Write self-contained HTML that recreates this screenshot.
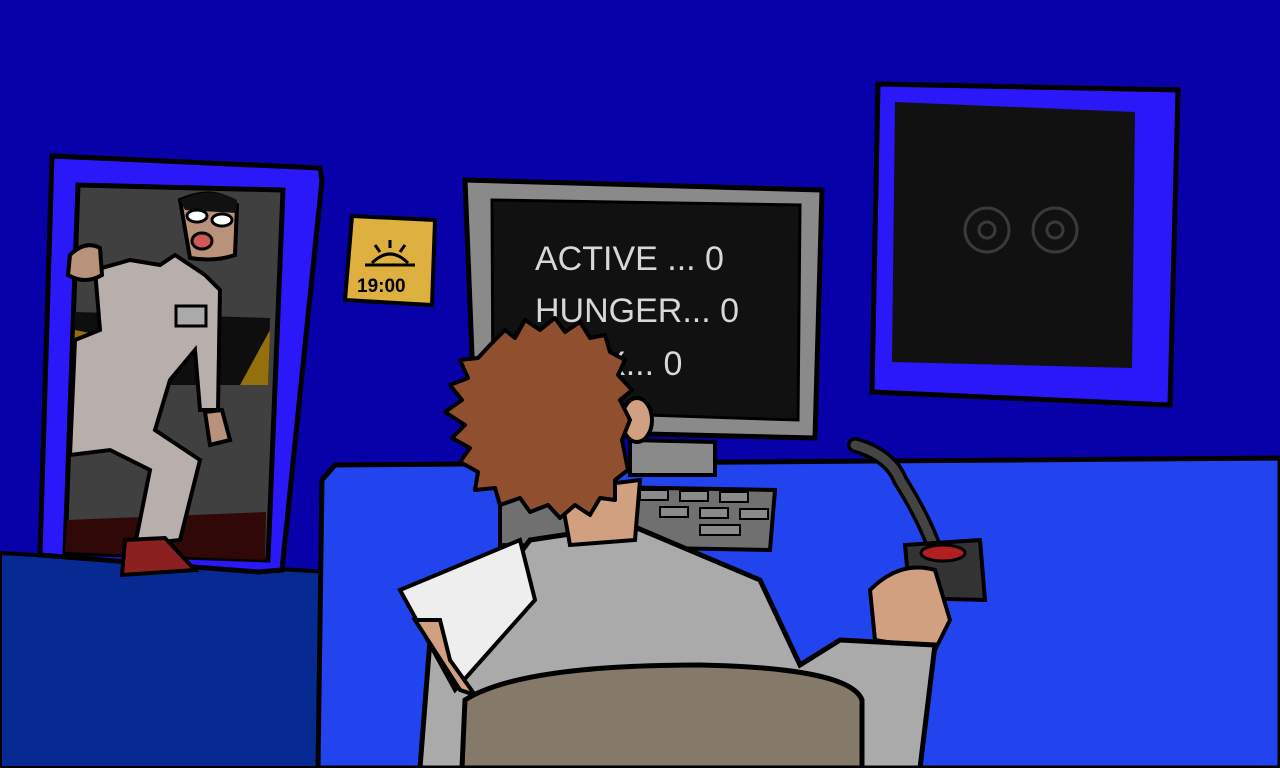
<!DOCTYPE html>
<html><head><meta charset="utf-8"><style>
html,body{margin:0;padding:0;width:1280px;height:768px;overflow:hidden;background:#0800a8}
svg{display:block}
text{font-family:"Liberation Sans",sans-serif}
</style></head><body>
<svg width="1280" height="768" viewBox="0 0 1280 768" xmlns="http://www.w3.org/2000/svg">
<rect width="1280" height="768" fill="#0800a8"/>
<path d="M0 553 L330 572 L320 768 L0 768Z" fill="#062a92" stroke="#000" stroke-width="4"/>
<path d="M52 156 L320 168 L322 180 L282 570 L258 572 L40 555Z" fill="#2a18f8" stroke="#000" stroke-width="5"/>
<path d="M78 185 L283 190 L268 560 L65 553Z" fill="#404040" stroke="#000" stroke-width="5"/>
<path d="M75 312 L270 318 L268 385 L72 385Z" fill="#0e0e0e"/>
<path d="M75 330 L100 335 L85 380 L73 380Z" fill="#94700c"/>
<path d="M150 340 L180 340 L165 385 L135 385Z" fill="#94700c"/>
<path d="M270 330 L268 385 L240 385Z" fill="#94700c"/>
<path d="M67 520 L266 512 L265 560 L65 552Z" fill="#300808"/>
<path d="M130 260 L160 265 L175 255 L205 275 L220 290 L218 410 L200 410 L195 350 L170 380 L155 430 L200 460 L180 540 L135 545 L150 470 L110 450 L70 455 L75 340 L100 330 L95 270 Z" fill="#b8aeac" stroke="#000" stroke-width="4"/>
<path d="M125 540 L165 538 L195 570 L122 575Z" fill="#8a2020" stroke="#000" stroke-width="4"/>
<path d="M70 255 Q85 240 100 248 L102 275 Q85 285 68 275Z" fill="#b8927a" stroke="#000" stroke-width="4"/>
<path d="M205 412 L222 410 L230 440 L210 445Z" fill="#b8927a" stroke="#000" stroke-width="4"/>
<path d="M180 200 Q215 185 237 205 L235 255 Q215 262 190 258 Z" fill="#b8927a" stroke="#000" stroke-width="4"/>
<path d="M180 200 Q210 185 237 200 L236 213 L185 210Z" fill="#111"/>
<ellipse cx="197" cy="216" rx="10" ry="6" fill="#fff" stroke="#000" stroke-width="3"/>
<ellipse cx="222" cy="220" rx="10" ry="6" fill="#fff" stroke="#000" stroke-width="3"/>
<ellipse cx="202" cy="241" rx="10" ry="8" fill="#d05858" stroke="#000" stroke-width="3"/>
<rect x="176" y="306" width="30" height="20" fill="#aaa" stroke="#000" stroke-width="3"/>
<path d="M352 216 L435 220 L432 305 L345 300Z" fill="#ddb040" stroke="#000" stroke-width="4"/>
<text x="357" y="292" font-size="19" font-weight="bold" fill="#000">19:00</text>
<path d="M372 263 Q390 245 408 263 M365 265 L415 265 M390 240 L390 248 M375 245 L380 252 M405 245 L400 252" stroke="#000" stroke-width="3" fill="none"/>
<path d="M878 84 L1178 90 L1170 405 L872 392Z" fill="#2a18f8" stroke="#000" stroke-width="5"/>
<path d="M895 102 L1135 112 L1132 368 L892 362Z" fill="#111"/>
<g stroke="#3a3a3a" stroke-width="3" fill="none">
<circle cx="987" cy="230" r="22"/><circle cx="987" cy="230" r="8"/>
<circle cx="1055" cy="230" r="22"/><circle cx="1055" cy="230" r="8"/>
</g>
<path d="M335 465 L1280 458 L1280 768 L318 768 L322 480Z" fill="#2244ee" stroke="#000" stroke-width="5"/>
<path d="M465 180 L822 190 L815 438 L475 430Z" fill="#8a8a8a" stroke="#000" stroke-width="5"/>
<path d="M492 200 L800 205 L798 420 L493 410Z" fill="#111" stroke="#000" stroke-width="3"/>
<g fill="#d8d8d8" font-family="Liberation Sans,sans-serif" font-size="34">
<text x="535" y="270">ACTIVE ... 0</text>
<text x="535" y="322">HUNGER... 0</text>
<text x="535" y="375">XXXX... 0</text>
</g>
<path d="M630 440 L715 442 L715 475 L630 475Z" fill="#8a8a8a" stroke="#000" stroke-width="4"/>
<path d="M500 485 L775 490 L770 550 L500 545Z" fill="#707070" stroke="#000" stroke-width="4"/>
<g fill="#8a8a8a" stroke="#000" stroke-width="2">
<rect x="640" y="490" width="28" height="10"/><rect x="680" y="491" width="28" height="10"/><rect x="720" y="492" width="28" height="10"/>
<rect x="660" y="507" width="28" height="10"/><rect x="700" y="508" width="28" height="10"/><rect x="740" y="509" width="28" height="10"/>
<rect x="700" y="525" width="40" height="10"/>
</g>
<path d="M855 445 Q890 455 900 480 Q925 520 935 550" stroke="#000" stroke-width="16" fill="none" stroke-linecap="round"/>
<path d="M855 445 Q890 455 900 480 Q925 520 935 550" stroke="#444" stroke-width="9" fill="none" stroke-linecap="round"/>
<path d="M905 545 L980 540 L985 600 L910 598Z" fill="#333" stroke="#000" stroke-width="4"/>
<ellipse cx="943" cy="553" rx="22" ry="8" fill="#b02020" stroke="#000" stroke-width="3"/>
<path d="M870 590 Q900 560 935 570 L950 620 L935 650 L875 640Z" fill="#d0a080" stroke="#000" stroke-width="4"/>
<path d="M530 540 L630 525 L760 580 L800 665 L840 640 L935 645 L920 768 L420 768 L430 640 L470 620Z" fill="#aaaaaa" stroke="#000" stroke-width="5"/>
<path d="M560 490 L640 480 L635 540 L570 545Z" fill="#d0a080" stroke="#000" stroke-width="4"/>
<ellipse cx="637" cy="420" rx="15" ry="22" fill="#d0a080" stroke="#000" stroke-width="4"/>
<path d="M490 345 L505 330 L515 338 L525 320 L540 330 L555 318 L565 332 L580 322 L590 338 L605 335 L610 352 L625 360 L618 375 L632 390 L620 400 L630 420 L622 440 L628 470 L615 480 L615 500 L600 498 L590 515 L575 505 L560 518 L548 505 L530 512 L520 498 L500 505 L495 488 L475 490 L478 472 L460 462 L470 448 L452 438 L465 425 L445 412 L462 400 L450 385 L468 378 L460 360 L478 358Z" fill="#905030" stroke="#000" stroke-width="4" stroke-linejoin="round"/>
<path d="M400 590 L520 540 L535 600 L455 690 Z" fill="#eeeeee" stroke="#000" stroke-width="4"/>
<path d="M415 620 L460 690 L475 695 L450 660 L440 620Z" fill="#d0a080" stroke="#000" stroke-width="4"/>
<path d="M465 700 Q520 665 700 665 Q850 668 862 700 L862 768 L462 768Z" fill="#85796a" stroke="#000" stroke-width="5"/>
</svg>
</body></html>
